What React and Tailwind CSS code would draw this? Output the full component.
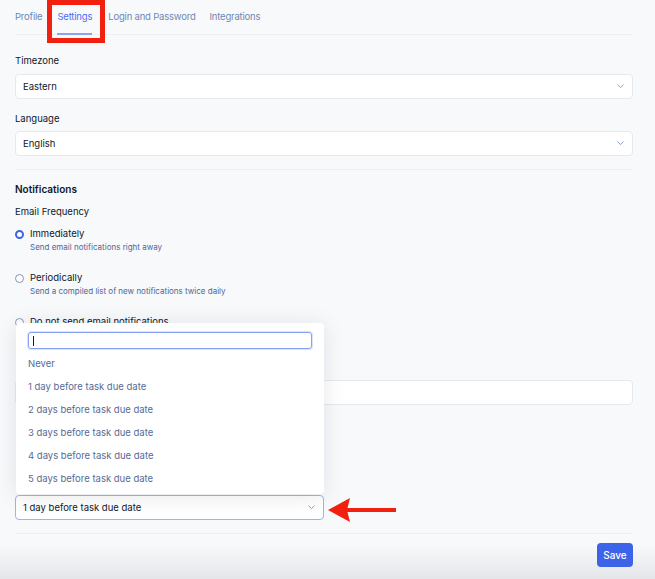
import React from "react";

const Chevron = ({ className }) => (
  <svg width="7" height="5" viewBox="0 0 7 5" fill="none" className={className}>
    <path
      d="M0.75 0.9L3.5 3.6L6.25 0.9"
      stroke="currentColor"
      strokeWidth="1"
      strokeLinecap="round"
      strokeLinejoin="round"
    />
  </svg>
);

function Select({ value, active, className = "" }) {
  return (
    <div
      className={`flex h-[25px] items-center justify-between rounded-[4px] border bg-white pl-[7px] pr-[8px] ${
        active ? "border-[#9db3ee]" : "border-[#e4e8f0]"
      } ${className}`}
    >
      <span className="text-[9.5px] leading-[12px] text-[#111827]">{value}</span>
      <Chevron className="text-[#8b9dca]" />
    </div>
  );
}

function Radio({ checked, label, desc }) {
  return (
    <div className="flex items-start gap-[6px]">
      <span
        className={`mt-[1.5px] h-[9px] w-[9px] shrink-0 rounded-full bg-white ${
          checked ? "border-[2.5px] border-[#3d63e6]" : "border border-[#8494b8]"
        }`}
      />
      <div>
        <div className="text-[9.5px] leading-[12px] text-[#0f172a]">{label}</div>
        <div className="mt-[2px] h-[11px] text-[8px] leading-[11px] text-[#4c6897]">{desc}</div>
      </div>
    </div>
  );
}

const tabs = [
  { label: "Profile", cls: "" },
  { label: "Settings", cls: "ml-[15px]" },
  { label: "Login and Password", cls: "ml-[16px]" },
  { label: "Integrations", cls: "ml-[14px]" },
];
const options = [
  "Never",
  "1 day before task due date",
  "2 days before task due date",
  "3 days before task due date",
  "4 days before task due date",
  "5 days before task due date",
];

export default function App() {
  return (
    <div className="relative h-[579px] w-full overflow-hidden bg-[linear-gradient(180deg,#f8f9fb_0px,#f8f9fb_545px,#e5e6e9_579px)] pl-[15px] pr-[22px] font-['Inter',sans-serif]">
      {/* tabs */}
      <nav className="flex border-b border-[#eceef3] text-[9.5px] leading-[12px] tracking-[-0.2px]">
        {tabs.map((t) => (
          <div
            key={t.label}
            className={`${t.cls} ${
              t.label === "Settings"
                ? "-mb-px border-b-2 border-[#8fa2f2] pb-[9px] pt-[11px] text-[#4d6ef5]"
                : "pb-[11px] pt-[11px] text-[#7087b3]"
            }`}
          >
            {t.label}
          </div>
        ))}
      </nav>

      <div className="mt-[20px] text-[9.5px] leading-[12px] text-[#0f172a]">Timezone</div>
      <Select value="Eastern" className="mt-[7px]" />

      <div className="mt-[14px] text-[9.5px] leading-[12px] text-[#0f172a]">Language</div>
      <Select value="English" className="mt-[6px]" />

      <div className="mt-[13px] h-px bg-[#eceef3]" />

      <div className="mt-[13px] text-[10px] font-semibold leading-[12px] text-[#0f172a]">Notifications</div>
      <div className="mt-[11px] text-[9.5px] leading-[12px] text-[#0f172a]">Email Frequency</div>

      <div className="mt-[10px] flex flex-col gap-[19px]">
        <Radio checked label="Immediately" desc="Send email notifications right away" />
        <Radio label="Periodically" desc="Send a compiled list of new notifications twice daily" />
        <Radio label="Do not send email notifications" />
      </div>

      {/* section hidden behind the open dropdown */}
      <div className="mt-[21px] h-[12px]" />
      <div className="mt-[6px] h-[25px] rounded-[4px] border border-[#e4e8f0] bg-white" />
      <div className="mt-[19px] h-[12px]" />
      <div className="mt-[4px] h-[20px]" />
      <div className="mt-[17px] h-[12px]" />

      <div className="relative mt-[6px] w-[309px]">
        <Select value="1 day before task due date" active />
        {/* open dropdown */}
        <div className="absolute bottom-full left-[1px] mb-px w-[308px] rounded-[4px] bg-white px-[12px] pb-[3px] pt-[9px] shadow-[0_2px_22px_rgba(15,23,42,0.10)]">
          <div className="flex h-[17px] items-center rounded-[3px] border-[1.5px] border-[#86a0f3] pl-[4px] shadow-[0_0_0_1px_#dbe3fd]">
            <div className="h-[10px] w-px bg-[#111827]" />
          </div>
          <div className="mt-[4px]">
            {options.map((o) => (
              <div key={o} className="flex h-[23px] items-center text-[9.5px] text-[#566b96]">
                {o}
              </div>
            ))}
          </div>
        </div>
      </div>

      <div className="mt-[13px] h-px bg-[#eceef3]" />
      <div className="mt-[9px] flex justify-end">
        <button className="flex h-[24px] w-[36px] items-center justify-center rounded-[4px] bg-[#3d63e8] text-[10px] font-medium text-white">
          Save
        </button>
      </div>

      {/* annotation: red box around Settings tab */}
      <div className="absolute left-[47px] top-0 h-[43px] w-[58px] border-[5px] border-[#f2210f]" />

      {/* annotation: red arrow */}
      <svg className="absolute left-[327px] top-[497px]" width="72" height="26" viewBox="0 0 72 26">
        <polygon points="1,13 23,1 20,13 23,25" fill="#f2210f" />
        <rect x="19" y="11" width="50" height="4" fill="#f2210f" />
      </svg>
    </div>
  );
}
